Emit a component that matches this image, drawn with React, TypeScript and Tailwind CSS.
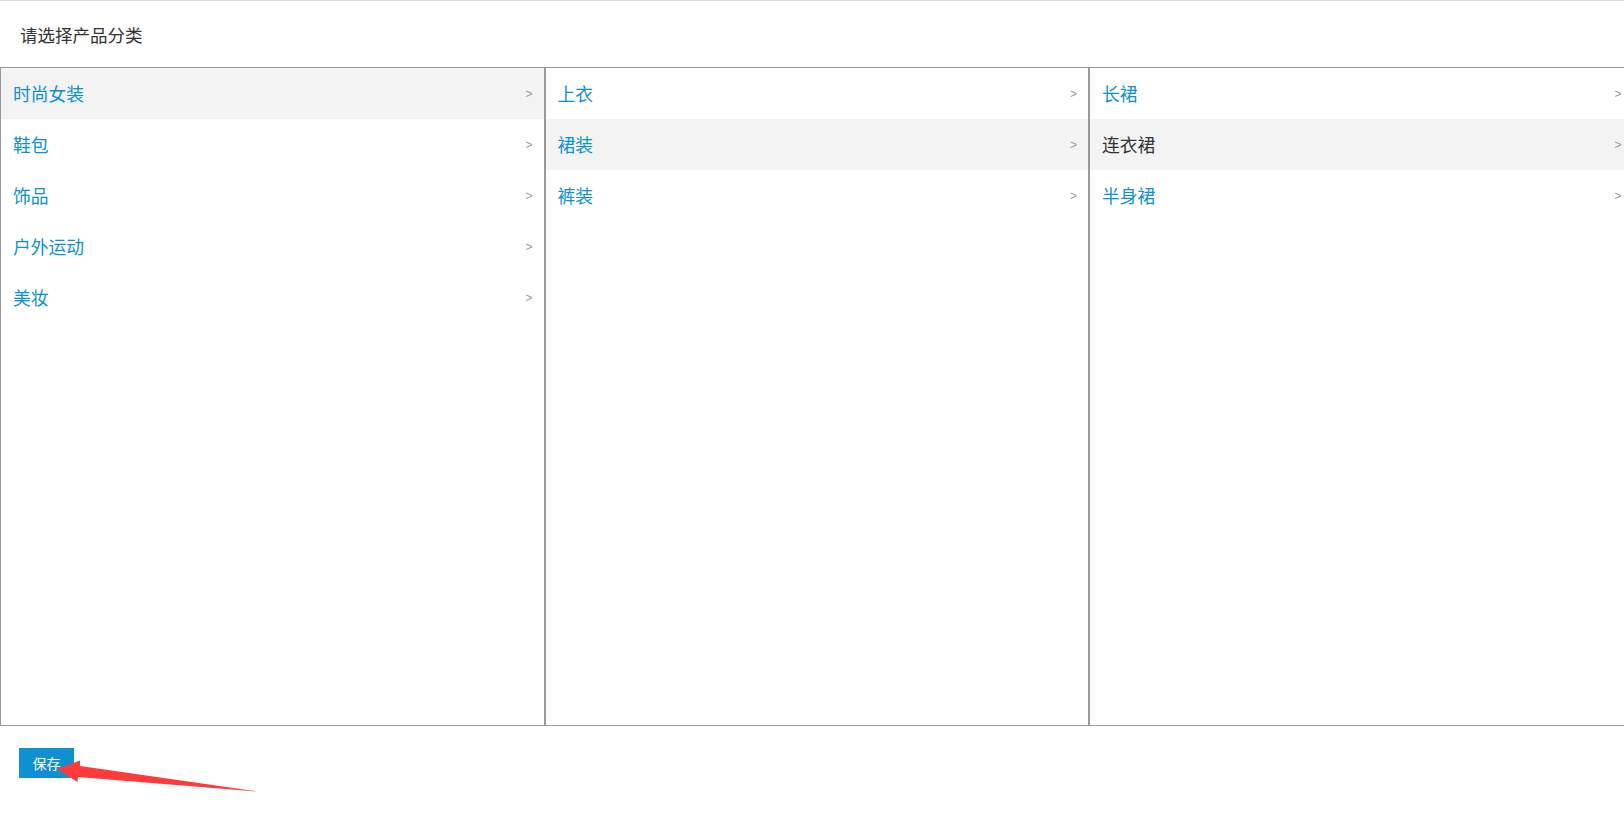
import { useState } from "react"

const tree: Record<string, Record<string, string[]>> = {
  时尚女装: {
    上衣: ["T恤", "衬衫", "卫衣"],
    裙装: ["长裙", "连衣裙", "半身裙"],
    裤装: ["牛仔裤", "休闲裤"],
  },
  鞋包: {},
  饰品: {},
  户外运动: {},
  美妆: {},
}

function Column({
  items,
  active,
  onPick,
  dark,
}: {
  items: string[]
  active: string
  onPick: (v: string) => void
  dark?: boolean
}) {
  return (
    <ul className="w-[544.5px] shrink-0 h-[659px] border border-[#999]">
      {items.map((it) => {
        const on = it === active
        return (
          <li
            key={it}
            onClick={() => onPick(it)}
            className={`h-[51px] flex items-center justify-between pl-3 pr-[11px] cursor-pointer ${
              on ? "bg-[#f3f3f3]" : ""
            }`}
          >
            <span className={`text-[17.8px] ${on && dark ? "text-[#333]" : "text-[#0e90d2]"}`}>{it}</span>
            <span className="text-[12px] text-[#999] font-['Liberation_Sans',sans-serif]">&gt;</span>
          </li>
        )
      })}
    </ul>
  )
}

export default function App() {
  const [a, setA] = useState("时尚女装")
  const [b, setB] = useState("裙装")
  const [c, setC] = useState("连衣裙")

  const second = Object.keys(tree[a] || {})
  const third = (tree[a] && tree[a][b]) || []

  return (
    <div className="relative w-full h-[829px] overflow-hidden bg-white font-['Noto_Sans_CJK_SC','Noto_Sans',sans-serif]">
      <div className="border-t border-[#ddd]">
        <div className="h-[66px] flex items-center pl-5 pt-[3px] text-[17.5px] text-[#333]">请选择产品分类</div>
        <div className="flex">
          <Column items={Object.keys(tree)} active={a} onPick={setA} />
          <Column items={second} active={b} onPick={setB} />
          <Column items={third} active={c} onPick={setC} dark />
        </div>
        <div className="pl-[19px] pt-[22px]">
          <button className="w-[55px] h-[30px] bg-[#0e90d2] text-white text-[14px] leading-none">保存</button>
        </div>
      </div>

      <svg className="absolute left-0 top-0 pointer-events-none" width="300" height="829" viewBox="0 0 300 829">
        <polygon
          points="57,769 80,760.5 80,766 257,791.5 78,777 77.5,782"
          fill="#ff3a3a"
        />
      </svg>
    </div>
  )
}
